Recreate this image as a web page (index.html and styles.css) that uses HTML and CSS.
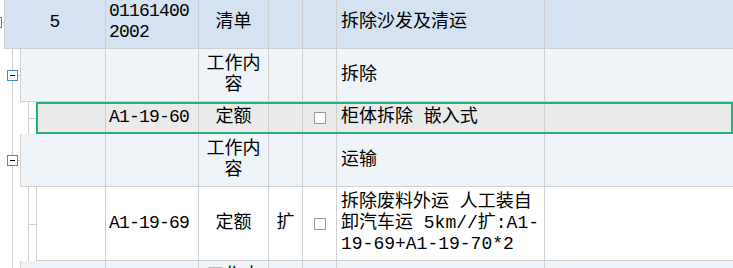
FILE: index.html
```html
<!DOCTYPE html>
<html>
    <head>
        <title>Quota Tree</title>
        <link rel="stylesheet" href="styles.css">
    </head>
    <body>
        <div class="tree">
            <div class="row level-0">
                <div class="gutter"><span class="toggle"></span></div>
                <div class="cells bill">
                    <div class="cell center">5</div>
                    <div class="cell code">011614002002</div>
                    <div class="cell center">清单</div>
                    <div class="cell"></div>
                    <div class="cell"></div>
                    <div class="cell text">拆除沙发及清运</div>
                    <div class="cell"></div>
                </div>
            </div>

            <div class="row level-1">
                <div class="gutter"><span class="toggle"></span></div>
                <div class="cells work">
                    <div class="cell"></div>
                    <div class="cell"></div>
                    <div class="cell center">工作内容</div>
                    <div class="cell"></div>
                    <div class="cell"></div>
                    <div class="cell text">拆除</div>
                    <div class="cell"></div>
                </div>
            </div>

            <div class="row level-2">
                <div class="gutter"></div>
                <div class="cells quota selected">
                    <div class="cell"></div>
                    <div class="cell code">A1-19-60</div>
                    <div class="cell center">定额</div>
                    <div class="cell center"></div>
                    <div class="cell center"><span class="check"></span></div>
                    <div class="cell text">柜体拆除 嵌入式</div>
                    <div class="cell"></div>
                </div>
            </div>

            <div class="row level-1">
                <div class="gutter"><span class="toggle"></span></div>
                <div class="cells work">
                    <div class="cell"></div>
                    <div class="cell"></div>
                    <div class="cell center">工作内容</div>
                    <div class="cell"></div>
                    <div class="cell"></div>
                    <div class="cell text">运输</div>
                    <div class="cell"></div>
                </div>
            </div>

            <div class="row level-2">
                <div class="gutter"></div>
                <div class="cells quota">
                    <div class="cell"></div>
                    <div class="cell code">A1-19-69</div>
                    <div class="cell center">定额</div>
                    <div class="cell center">扩</div>
                    <div class="cell center"><span class="check"></span></div>
                    <div class="cell text nowrap">拆除废料外运 人工装自<br>卸汽车运 5km//扩:A1-<br>19-69+A1-19-70*2</div>
                    <div class="cell"></div>
                </div>
            </div>

            <div class="row level-1">
                <div class="gutter"><span class="toggle"></span></div>
                <div class="cells work">
                    <div class="cell"></div>
                    <div class="cell"></div>
                    <div class="cell center">工作内容</div>
                    <div class="cell"></div>
                    <div class="cell"></div>
                    <div class="cell text"></div>
                    <div class="cell"></div>
                </div>
            </div>
        </div>
    </body>
</html>
```

FILE: styles.css
```css
body {
    margin: 0;
    overflow: hidden;
    background: #fff;
    font-family: "Liberation Mono", "Noto Sans CJK SC", monospace;
    font-size: 18px;
    color: #000;
}

.tree {
    margin-top: -4px;
    margin-left: -16px;
}

.row {
    display: flex;
}

.gutter {
    display: flex;
    align-items: center;
    flex: none;
}
.level-0 .gutter {
    width: 20px;
    background: linear-gradient(#d0d0d0, #d0d0d0) 17px 50% / 3px 1px no-repeat;
}
.level-1 .gutter {
    width: 36px;
    background:
        linear-gradient(#d0d0d0, #d0d0d0) 28px 0 / 1px 100% no-repeat,
        linear-gradient(#d0d0d0, #d0d0d0) 33px 50% / 3px 1px no-repeat;
}
.level-2 .gutter {
    width: 52px;
    background:
        linear-gradient(#d0d0d0, #d0d0d0) 28px 0 / 1px 100% no-repeat,
        linear-gradient(#d0d0d0, #d0d0d0) 44px 0 / 1px 100% no-repeat,
        linear-gradient(#d0d0d0, #d0d0d0) 44px 50% / 8px 1px no-repeat;
}

.toggle {
    box-sizing: border-box;
    width: 11px;
    height: 11px;
    border: 1px solid #3b8dd0;
    background: #fff;
    display: flex;
    align-items: center;
    justify-content: center;
}
.toggle::after {
    content: "";
    width: 5px;
    height: 1px;
    background: #000;
}
.level-0 .toggle {
    margin-left: 7px;
}
.level-1 .toggle {
    margin-left: 23px;
}

.cells {
    flex: 1;
    display: grid;
    grid-template-columns: var(--first) 93px 70px 34px 34px 208px 1fr;
    border-left: 1px solid #d0d0d0;
    border-bottom: 1px solid #d0d0d0;
}
.level-0 .cells { --first: 101px; }
.level-1 .cells { --first: 85px; }
.level-2 .cells { --first: 69px; }

.bill {
    background: #d4e2f2;
}
.work {
    background: #eff4f8;
}
.quota {
    background: #fff;
}
.selected {
    background: #eaeaea;
    outline: 2px solid #22b27b;
    outline-offset: -2px;
}

.cell {
    box-sizing: border-box;
    padding: 5px 4px;
    line-height: 21px;
    border-right: 1px solid #d0d0d0;
    display: flex;
    align-items: center;
}
.cell:last-child {
    border-right: none;
}
.center {
    justify-content: center;
    text-align: center;
    padding-left: 1px;
    padding-right: 1px;
}
.code {
    word-break: break-all;
    letter-spacing: -0.8px;
    padding-left: 3px;
    padding-right: 0;
}
.text {
    padding-left: 4px;
}
.nowrap {
    white-space: nowrap;
}

.check {
    box-sizing: border-box;
    width: 12px;
    height: 12px;
    border: 1px solid #999;
    background: #fff;
}
```
